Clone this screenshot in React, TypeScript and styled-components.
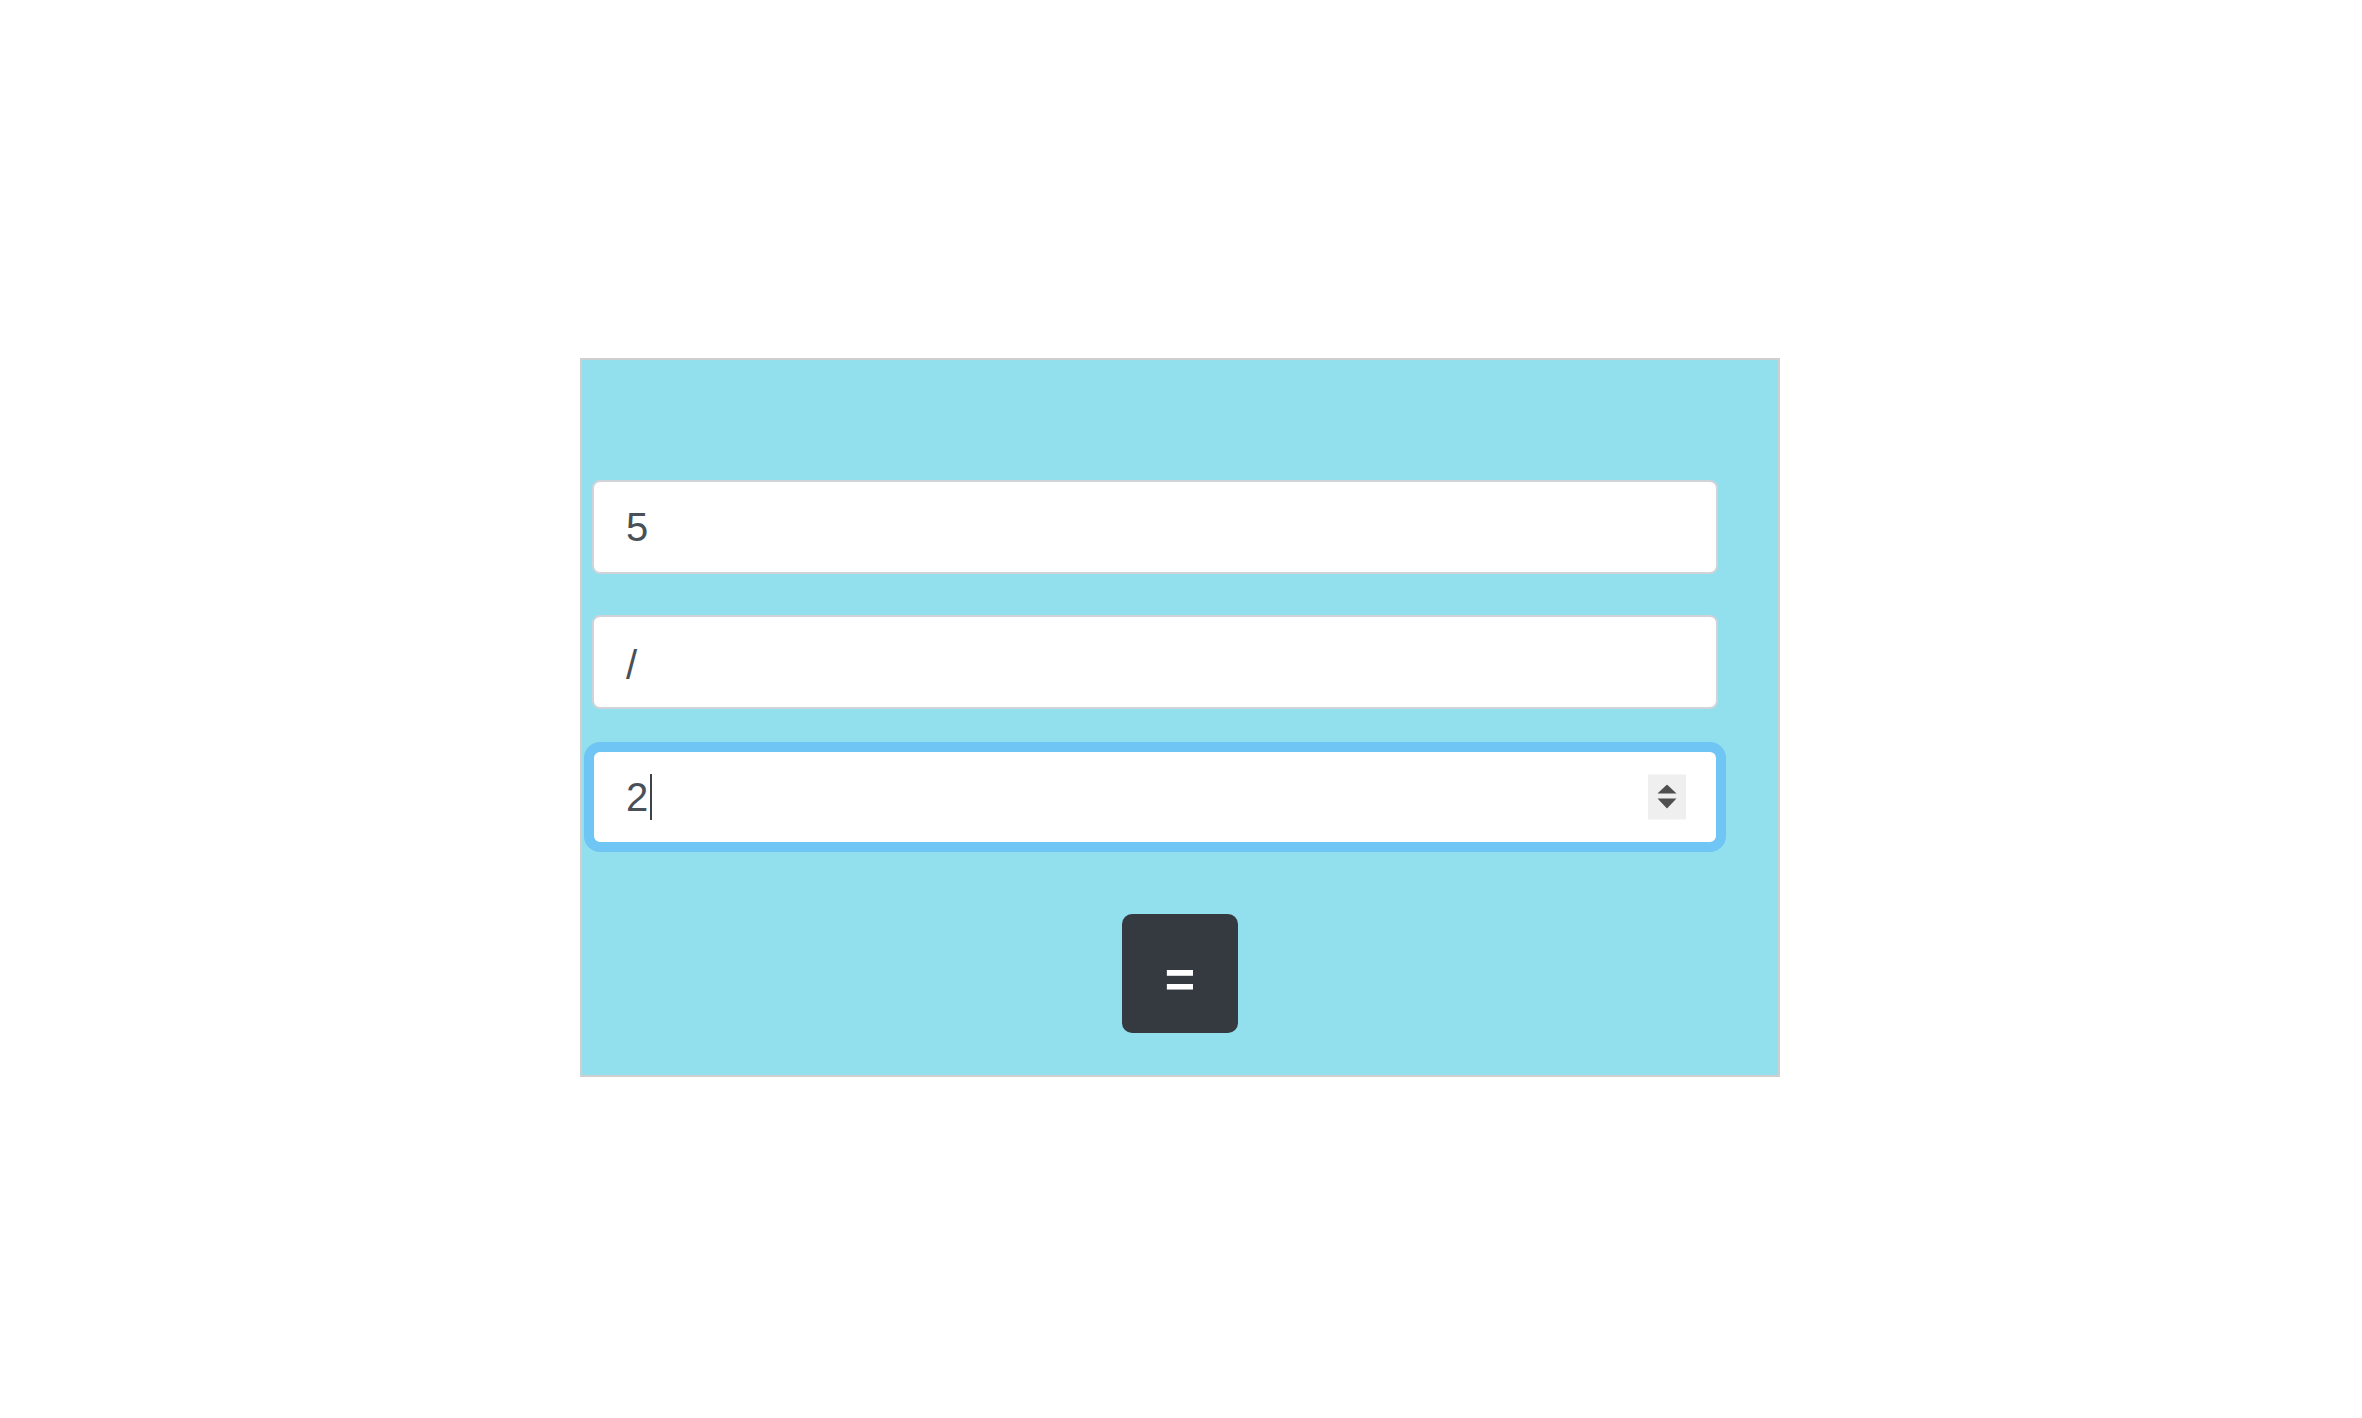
import React from "react";
import styled, { createGlobalStyle, css } from "styled-components";

const GlobalStyle = createGlobalStyle`
  html, body {
    margin: 0;
    padding: 0;
    background: #ffffff;
  }
  body {
    font-family: "Liberation Sans", Arial, sans-serif;
  }
`;

const Page = styled.div`
  display: flex;
  justify-content: center;
  padding-top: 358px;
  padding-right: 2px;
`;

const Panel = styled.form`
  box-sizing: border-box;
  width: 1200px;
  height: 719px;
  background: #92dfee;
  border: 2px solid #cfcfcf;
  padding: 120px 0 0 10px;
  display: flex;
  flex-direction: column;
  align-items: flex-start;
  gap: 41px;
`;

const Field = styled.div<{ $focused?: boolean }>`
  position: relative;
  box-sizing: border-box;
  width: 1126px;
  height: 94px;
  background: #ffffff;
  border: 2px solid #d0d4d9;
  border-radius: 8px;
  padding: 0 0 0 32px;
  display: flex;
  align-items: center;
  font-family: "Liberation Sans", Arial, sans-serif;
  font-size: 40px;
  color: #495057;
  ${(p) =>
    p.$focused &&
    css`
      border-color: #6fc5f4;
      box-shadow: 0 0 0 8px #6fc5f4;
    `}
`;

const Value = styled.span<{ $shift?: number }>`
  line-height: 1;
  position: relative;
  top: ${(p) => p.$shift ?? 0}px;
`;

const Caret = styled.span`
  display: inline-block;
  width: 1.5px;
  height: 46px;
  background: #3d434a;
  margin-left: 2px;
`;

const Spinner = styled.div`
  position: absolute;
  right: 30px;
  top: 50%;
  transform: translateY(-50%);
  width: 38px;
  height: 45px;
  background: #efefef;
  display: flex;
  align-items: center;
  justify-content: center;
`;

const EqualsButton = styled.button`
  align-self: center;
  margin-left: -10px;
  margin-top: 29px;
  width: 116px;
  height: 119px;
  border: none;
  border-radius: 10px;
  background: #343a40;
  color: #ffffff;
  font-family: "Liberation Sans", Arial, sans-serif;
  font-weight: 700;
  font-size: 52px;
  line-height: 1;
  padding: 10px 0 0 0;
  display: flex;
  align-items: center;
  justify-content: center;
  cursor: pointer;
`;

export default function App() {
  return (
    <>
      <GlobalStyle />
      <Page>
        <Panel onSubmit={(e) => e.preventDefault()}>
          <Field>
            <Value>5</Value>
          </Field>
          <Field>
            <Value $shift={3}>/</Value>
          </Field>
          <Field $focused>
            <Value>2</Value>
            <Caret />
            <Spinner>
              <svg width="20" height="26" viewBox="0 0 20 26">
                <polygon points="10,0 19.5,9 0.5,9" fill="#4f4f4f" />
                <polygon points="0.5,14 19.5,14 10,24" fill="#4f4f4f" />
              </svg>
            </Spinner>
          </Field>
          <EqualsButton type="submit">=</EqualsButton>
        </Panel>
      </Page>
    </>
  );
}
